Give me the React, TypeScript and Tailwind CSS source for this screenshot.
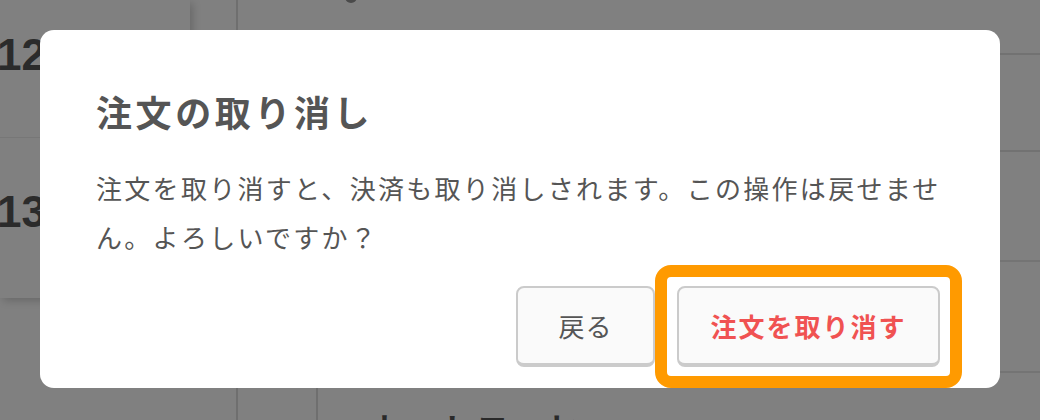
import React from "react";

const jp = { fontFamily: '"Noto Sans CJK JP", "Noto Sans", sans-serif' };
const num = { fontFamily: '"Liberation Sans", Arial, sans-serif' };

export default function App() {
  return (
    <div className="relative w-[1040px] h-[420px] overflow-hidden bg-[#808080] flex" style={jp}>
      {/* dimmed page underneath */}
      <div className="w-[190px] shrink-0 flex flex-col">
        <div className="h-[298px] shrink-0 flex flex-col bg-[#808080] shadow-[3px_3px_8px_rgba(0,0,0,0.18)]">
          <div className="h-[138px] shrink-0 border-b border-[#777] pt-[33px]">
            <div className="text-[44px] font-bold leading-[44px] text-[#2b2b2b] ml-[-3px]" style={num}>12</div>
          </div>
          <div className="flex-1 pt-[52px]">
            <div className="text-[44px] font-bold leading-[44px] text-[#2b2b2b] ml-[-3px]" style={num}>13</div>
          </div>
        </div>
      </div>
      <div className="w-[48px] shrink-0 border-r-2 border-[#6f6f6f]" />
      <div className="flex-1 flex flex-col overflow-hidden">
        <div className="h-[55px] shrink-0 border-b-2 border-[#727272]">
          <div className="ml-[107px] mt-[-9px] w-[12px] h-[12px] rounded-full bg-[#4a4a4a]" />
        </div>
        <div className="h-[97px] shrink-0 border-b-2 border-[#727272]" />
        <div className="h-[110px] shrink-0 border-b-2 border-[#747474]" />
        <div className="h-[111px] shrink-0 border-b-2 border-[#747474]" />
        <div className="h-[60px] shrink-0 flex">
          <div className="w-[80px] shrink-0 border-r-2 border-[#6f6f6f]" />
          <div className="pl-[50px] pt-[38px] text-[32px] font-bold leading-none text-[#2a2a2a] tracking-[4px] whitespace-nowrap">
            ホットコーヒー
          </div>
        </div>
      </div>

      {/* modal */}
      <div className="absolute left-[40px] top-[30px] w-[960px] h-[358px] rounded-[14px] bg-white pl-[56px] pr-[40px] pt-[63px] flex flex-col">
        <h2 className="text-[36px] font-bold leading-[36px] tracking-[3.6px] text-[#555] whitespace-nowrap">
          注文の取り消し
        </h2>
        <p className="mt-[34px] text-[26px] leading-[49px] tracking-[2.3px] text-[#555]">
          注文を取り消すと、決済も取り消しされます。この操作は戻せません。よろしいですか？
        </p>
        <div className="mt-[25px] flex justify-end gap-[22px] pr-[20px]">
          <button className="w-[139px] h-[81px] rounded-[8px] bg-[#fafafa] border-2 border-b-4 border-[#cbcbcb] text-[26px] tracking-[1px] text-[#555] flex items-center justify-center">
            戻る
          </button>
          <div className="relative">
            <button className="w-[263px] h-[81px] rounded-[8px] bg-[#fafafa] border-2 border-b-4 border-[#cbcbcb] text-[26px] font-bold tracking-[2px] text-[#f05252] flex items-center justify-center">
              注文を取り消す
            </button>
            <div className="absolute left-[-22px] right-[-22px] top-[-21px] bottom-[-21px] rounded-[16px] border-[12px] border-[#ff9a00] pointer-events-none" />
          </div>
        </div>
      </div>
    </div>
  );
}
